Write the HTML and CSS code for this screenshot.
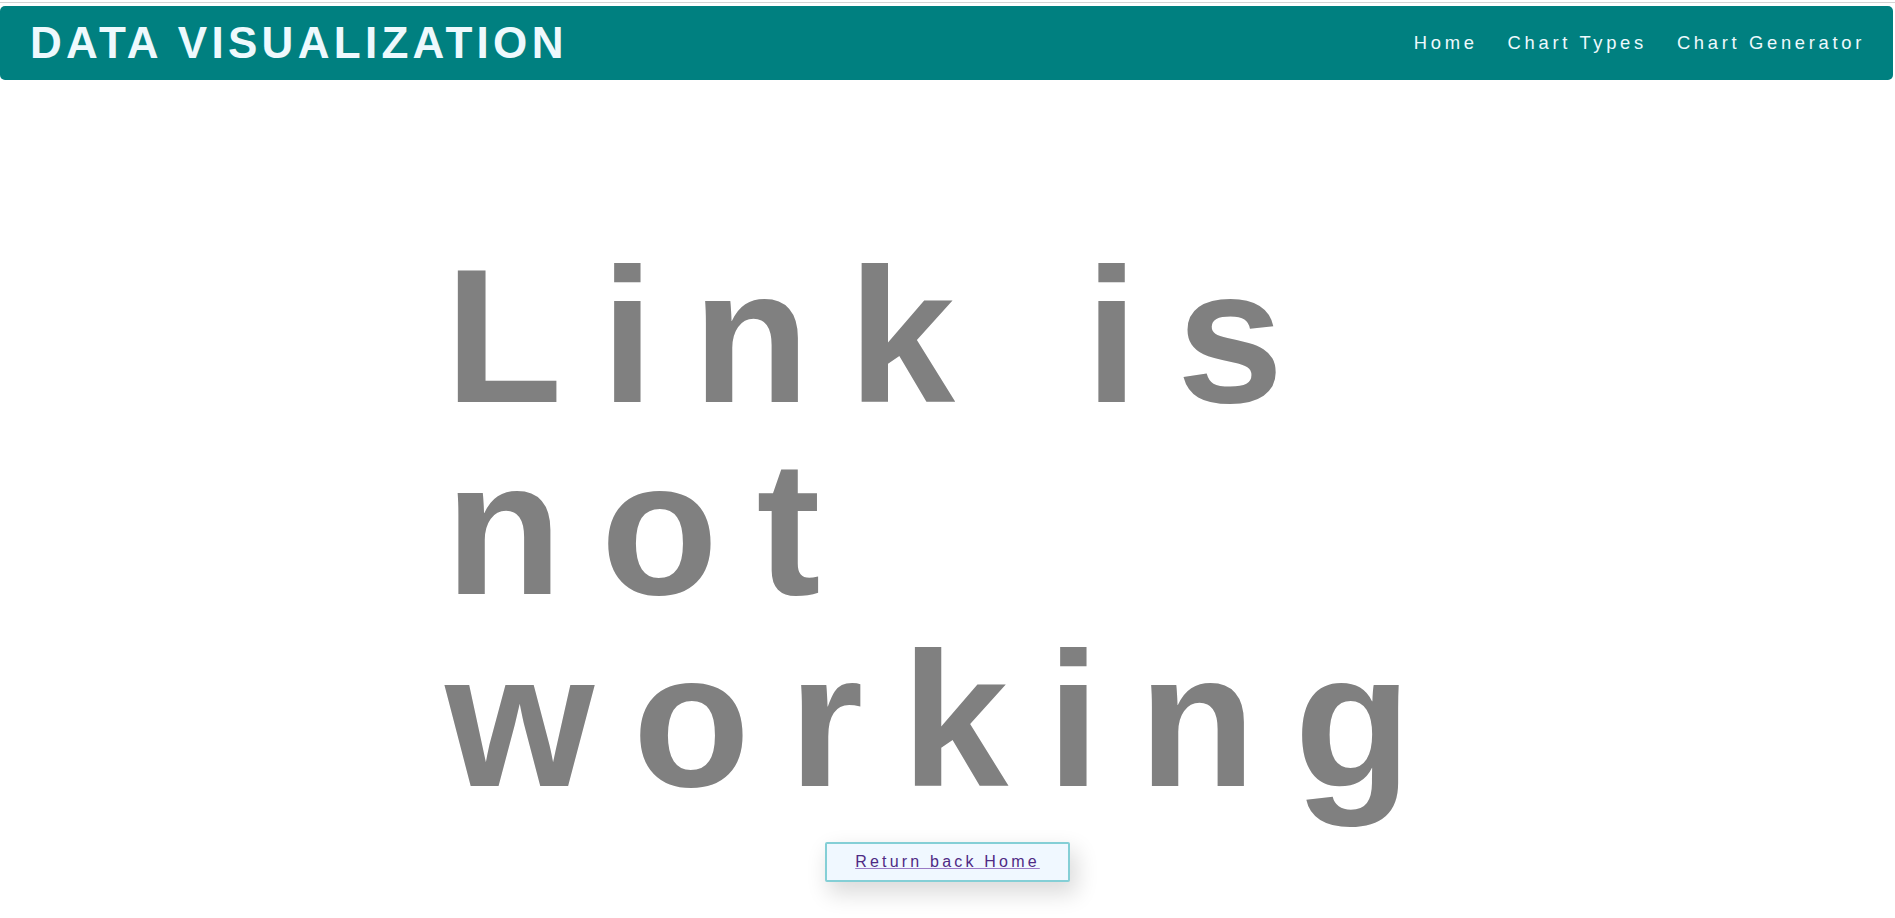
FILE: index.html
```html
<!DOCTYPE html>
<html lang="en">
<head>
<meta charset="utf-8">
<title>Data Visualization - Link is not working</title>
<link rel="stylesheet" href="styles.css">
</head>
<body>
<div class="topline"></div>
<header class="site-header">
  <div class="brand">DATA VISUALIZATION</div>
  <nav class="nav">
    <a class="nav-link" href="#">Home</a>
    <a class="nav-link" href="#">Chart Types</a>
    <a class="nav-link" href="#">Chart Generator</a>
  </nav>
</header>
<main class="content">
  <h1 class="message">Link is not working</h1>
  <div class="return">
    <a class="return-link" href="#">Return back Home</a>
  </div>
</main>
</body>
</html>
```

FILE: styles.css
```css
html, body {
  margin: 0;
  padding: 0;
  background: #ffffff;
}

body {
  font-family: "Liberation Sans", Arial, sans-serif;
}

.topline {
  height: 1px;
  margin-top: 2px;
  background: #d4d4d4;
}

.site-header {
  margin: 3px 2px 0 0;
  height: 74px;
  background: #008080;
  border-radius: 5px;
  display: flex;
  align-items: center;
  justify-content: space-between;
  padding: 0 28px 0 30px;
  box-sizing: border-box;
}

.brand {
  color: #eef9fd;
  font-weight: bold;
  font-size: 44px;
  letter-spacing: 4.3px;
  line-height: 1;
}

.nav {
  display: flex;
  gap: 30px;
}

.nav-link {
  color: #eef9fd;
  text-decoration: none;
  font-size: 18.4px;
  letter-spacing: 0.2em;
}

.content {
  display: flex;
  flex-direction: column;
  align-items: center;
  padding-bottom: 36px;
}

.message {
  width: min-content;
  margin: 160px auto 26px;
  color: #808080;
  font-size: 192px;
  line-height: 1;
  letter-spacing: 0.2em;
  font-weight: bold;
}

.return {
  border: 2px solid #84cfd6;
  border-radius: 2px;
  background: #f0f8ff;
  padding: 9px 28px;
  box-shadow: 5px 10px 22px 2px rgba(0, 0, 0, 0.14);
}

.return-link {
  color: #4e2a84;
  font-size: 16px;
  letter-spacing: 0.2em;
  text-decoration: underline;
  text-decoration-color: #9a7bc6;
}
```
